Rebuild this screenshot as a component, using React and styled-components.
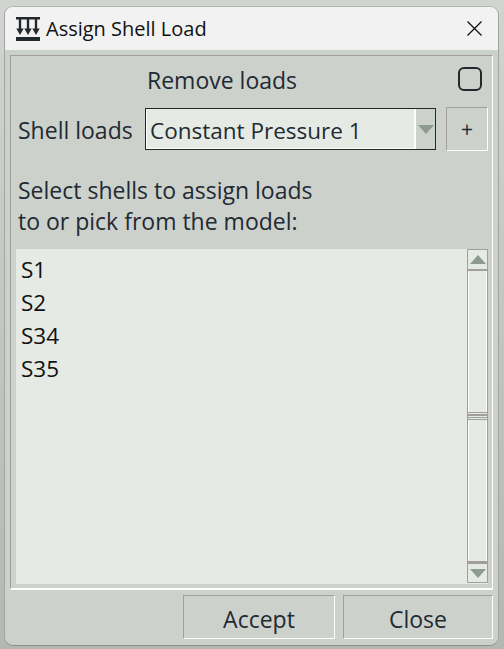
import React from 'react'
import styled, { createGlobalStyle } from 'styled-components'

const shells = ['S1', 'S2', 'S34', 'S35']

const App = () => {
  return (
    <Desktop>
      <GlobalStyle />
      <Window>
        <TitleBar>
          <TitleIcon width="24" height="24" viewBox="0 0 24 24">
            <path d="M0 0h24v2.5H0z" fill="#22282c" />
            <path d="M2.8 2h2.4v11H2.8zM10.8 2h2.4v11h-2.4zM18.8 2h2.4v11h-2.4z" fill="#22282c" />
            <path d="M0.3 11.5h7.4l-3.7 6.5zM8.3 11.5h7.4l-3.7 6.5zM16.3 11.5h7.4l-3.7 6.5z" fill="#22282c" />
            <path d="M0 20h24v4H0z" fill="#22282c" />
          </TitleIcon>
          <Title>Assign Shell Load</Title>
          <CloseIcon width="15" height="15" viewBox="0 0 15 15">
            <path d="M0.5 0.5l14 14M14.5 0.5l-14 14" stroke="#111" strokeWidth="1.3" fill="none" />
          </CloseIcon>
        </TitleBar>
        <Body>
          <Panel>
            <RemoveRow>
              <RemoveLabel>Remove loads</RemoveLabel>
              <Checkbox />
            </RemoveRow>
            <LoadsRow>
              <Label>Shell loads</Label>
              <Combo>
                <ComboText>Constant Pressure 1</ComboText>
                <ComboButton>
                  <Arrow />
                </ComboButton>
              </Combo>
              <PlusButton>+</PlusButton>
            </LoadsRow>
            <Hint>
              Select shells to assign loads
              <br />
              to or pick from the model:
            </Hint>
            <ListBox>
              <Items>
                {shells.map(shell => (
                  <Item key={shell}>{shell}</Item>
                ))}
              </Items>
              <ScrollBar>
                <ScrollButton up>
                  <Arrow up />
                </ScrollButton>
                <Thumb>
                  <Grip />
                </Thumb>
                <ScrollButton>
                  <Arrow />
                </ScrollButton>
              </ScrollBar>
            </ListBox>
          </Panel>
          <Footer>
            <FooterButton width={152}>Accept</FooterButton>
            <FooterButton width={150}>Close</FooterButton>
          </Footer>
        </Body>
      </Window>
    </Desktop>
  )
}

export default App

const GlobalStyle = createGlobalStyle`
  html, body {
    margin: 0;
    padding: 0;
    background: #b4b7b3;
  }
`

const Desktop = styled.div`
  width: 504px;
  height: 649px;
  box-sizing: border-box;
  padding: 6px 5px 3px 4px;
  background: linear-gradient(#d2d4d1, #b4b7b3);
  overflow: hidden;
  font-family: "Open Sans", "Noto Sans", sans-serif;
  color: #1f2a33;
`

const Window = styled.div`
  height: 100%;
  display: flex;
  flex-direction: column;
  border-radius: 9px;
  overflow: hidden;
  border: 1px solid #a3a5a2;
  border-top-color: #b3b5b2;
  border-bottom-color: #8f908e;
  box-sizing: border-box;
  background: #cdd1cc;
`

const TitleBar = styled.div`
  height: 43px;
  flex: none;
  display: flex;
  align-items: center;
  padding: 0 16px 0 11px;
  background: #f2f2f2;
  box-sizing: border-box;
`

const TitleIcon = styled.svg`
  flex: none;
  margin-right: 6px;
`

const Title = styled.div`
  flex: 1;
  font-size: 20px;
  color: #111;
`

const CloseIcon = styled.svg`
  flex: none;
`

const Body = styled.div`
  flex: 1;
  min-height: 0;
  display: flex;
  flex-direction: column;
  padding: 5px 5px 0 5px;
`

const Panel = styled.div`
  flex: 1;
  min-height: 0;
  display: flex;
  flex-direction: column;
  box-sizing: border-box;
  padding: 0 5px 4px;
  border: 1px solid #a39e99;
  border-right-color: #fff;
  border-bottom: 2px solid #fff;
`

const RemoveRow = styled.div`
  height: 51px;
  flex: none;
  display: flex;
  align-items: center;
  justify-content: space-between;
  padding: 0 5px 4px 0;
  box-sizing: border-box;
`

const RemoveLabel = styled.div`
  font-size: 23px;
  margin-left: 131px;
`

const Checkbox = styled.div`
  width: 24px;
  height: 24px;
  box-sizing: border-box;
  border: 2.5px solid #22282c;
  border-radius: 6px;
  margin-top: -1px;
`

const LoadsRow = styled.div`
  height: 44px;
  flex: none;
  display: flex;
  align-items: center;
`

const Label = styled.div`
  font-size: 23px;
  margin-left: 2px;
  padding-top: 2px;
  width: 127px;
  flex: none;
`

const Combo = styled.div`
  width: 291px;
  height: 42px;
  flex: none;
  display: flex;
  box-sizing: border-box;
  border: 1px solid #22282c;
  background: #e5eae4;
`

const ComboText = styled.div`
  flex: 1;
  font-size: 22.5px;
  line-height: 44px;
  height: 40px;
  padding-left: 4px;
  border-right: 2px solid #fff;
  box-shadow: inset 1px -1px 0 #fff;
`

const ComboButton = styled.div`
  width: 19px;
  flex: none;
  display: flex;
  justify-content: center;
  padding-top: 16px;
  box-sizing: border-box;
  background: #cdd1cc;
`

const Arrow = styled.div`
  width: 0;
  height: 0;
  border-left: 8px solid transparent;
  border-right: 8px solid transparent;
  ${props => props.up
    ? 'border-bottom: 9px solid #8f9a8f;'
    : 'border-top: 9px solid #8f9a8f;'}
`

const PlusButton = styled.div`
  width: 42px;
  height: 44px;
  flex: none;
  margin-left: 10px;
  box-sizing: border-box;
  border: 1px solid #a39e99;
  border-right-color: #fff;
  border-bottom-color: #fff;
  font-size: 21px;
  line-height: 43px;
  text-align: center;
`

const Hint = styled.div`
  flex: none;
  font-size: 23px;
  line-height: 31px;
  margin: 24px 0 12px 2px;
`

const ListBox = styled.div`
  flex: 1;
  min-height: 0;
  display: flex;
  background: #e5eae4;
  margin-right: -1px;
`

const Items = styled.div`
  flex: 1;
  padding: 4px 0 0 5px;
`

const Item = styled.div`
  font-size: 22.5px;
  line-height: 33px;
  color: #111;
`

const ScrollBar = styled.div`
  width: 21px;
  flex: none;
  display: flex;
  flex-direction: column;
  box-sizing: border-box;
  padding-bottom: 1px;
`

const ScrollButton = styled.div`
  height: ${props => (props.up ? 22 : 20)}px;
  flex: none;
  display: flex;
  justify-content: center;
  align-items: center;
  box-sizing: border-box;
  border: 1px solid #a39e99;
  ${props => props.up && 'border-bottom-width: 2px;'}
  background: #e5eae4;
`

const Thumb = styled.div`
  flex: 1;
  display: flex;
  align-items: center;
  box-sizing: border-box;
  border: 1px solid #a39e99;
  border-top: none;
  border-bottom-width: 2px;
  box-shadow: inset 1px 0 0 #fff, inset -1px 0 0 #fff;
  background: #e5eae4;
`

const Grip = styled.div`
  width: 100%;
  height: 9px;
  background: repeating-linear-gradient(#a39e99 0 1.2px, #e5eae4 1.2px 2.4px);
`

const Footer = styled.div`
  height: 55px;
  flex: none;
  display: flex;
  justify-content: flex-end;
  align-items: flex-start;
  gap: 8px;
  padding-top: 5px;
  box-sizing: border-box;
`

const FooterButton = styled.div`
  width: ${props => props.width}px;
  height: 44px;
  box-sizing: border-box;
  border: 1px solid #a39e99;
  border-right-color: #fff;
  border-bottom-color: #fff;
  font-size: 23px;
  line-height: 47px;
  text-align: center;
`
